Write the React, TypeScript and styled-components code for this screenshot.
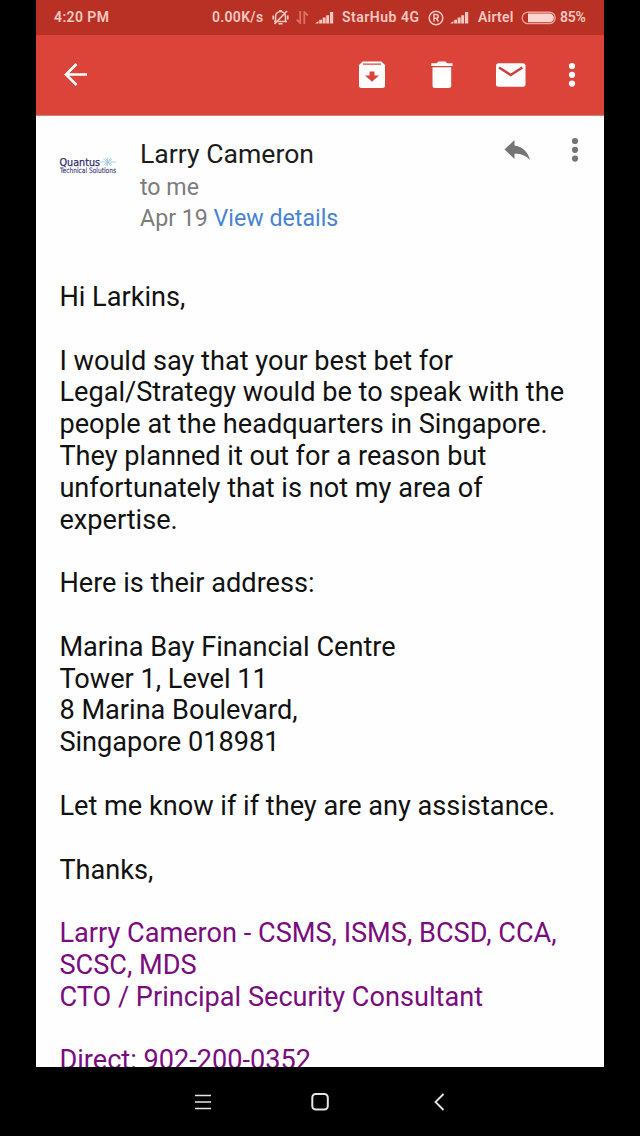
import React from 'react';
import styled, { createGlobalStyle } from 'styled-components';

const GlobalStyle = createGlobalStyle`
  * { box-sizing: border-box; }
  body { margin: 0; background: #000; font-family: Roboto, sans-serif; }
  svg { display: block; }
`;

const Phone = styled.div`
  width: 640px;
  height: 1136px;
  padding: 0 36px;
  background: #000;
  display: flex;
  flex-direction: column;
  overflow: hidden;
`;

const StatusBar = styled.header`
  height: 35px;
  flex: none;
  padding: 0 0 0 18px;
  background: #b93124;
  color: #fbc9c1;
  display: grid;
  grid-template-columns: 158px 60px 24px 19px 27px 86px 22px 28px 43px 39px 1fr;
  align-items: center;
  font-size: 14px;
  line-height: 35px;
  font-weight: 600;
  white-space: nowrap;
`;

const StatusText = styled.span<{ $spacing?: number }>`
  letter-spacing: ${(p) => p.$spacing ?? 0}px;
`;

const Toolbar = styled.nav`
  height: 81px;
  flex: none;
  padding: 0 19px 0 23px;
  background: #dc4439;
  border-bottom: 1px solid #c98780;
  color: #fff;
  display: flex;
  align-items: center;
`;

const Slot = styled.span<{ $width: number; $push?: boolean }>`
  width: ${(p) => p.$width}px;
  margin-left: ${(p) => (p.$push ? 'auto' : '0')};
  display: flex;
`;

const Mail = styled.main`
  height: 951px;
  flex: none;
  overflow: hidden;
  background: #fefefe;
`;

const MailHeader = styled.section`
  height: 165.9px;
  padding: 21px 25px 0 23px;
  display: flex;
`;

const Logo = styled.div`
  width: 81px;
  padding-top: 18px;
`;

const Sender = styled.div`
  flex: 1;
  white-space: nowrap;
`;

const Name = styled.div`
  font-size: 26.6px;
  line-height: 33px;
  padding-bottom: 2px;
  color: #1c1c1c;
`;

const Meta = styled.div`
  font-size: 23.2px;
  line-height: 31px;
  color: #7c7c7c;
`;

const Link = styled.a`
  color: #4783d2;
`;

const HeaderActions = styled.div`
  display: flex;
  color: #757575;
`;

const Body = styled.article`
  padding-left: 23.4px;
  font-size: 27.15px;
  line-height: 31.82px;
  color: #111;
  white-space: pre;
`;

const Paragraph = styled.p<{ $signature?: boolean }>`
  margin: 0 0 31.82px;
  color: ${(p) => (p.$signature ? '#7a0c7e' : 'inherit')};
`;

const NavBar = styled.footer`
  height: 69px;
  flex: none;
  color: #e6e6e6;
  display: flex;
  justify-content: center;
  align-items: center;
  gap: 94px;
`;

const Signal = () => (
  <svg width="19" height="13" viewBox="0 0 19 13" fill="currentColor">
    <path d="M0 12.500l3.500-2.400v2.400zM4.200 12.500V8.700h2.900v3.800zM7.700 12.500V6.500h2.900v6zM11.200 12.500V4.300h2.900v8.200zM15 12.500V1h3.200v11.500z" />
  </svg>
);

const Dots = () => (
  <svg width="8" height="26" viewBox="0 0 8 26" fill="currentColor">
    <circle cx="4" cy="4" r="3.100" />
    <circle cx="4" cy="12.800" r="3.100" />
    <circle cx="4" cy="21.600" r="3.100" />
  </svg>
);

const paragraphs = [
  'Hi Larkins,',
  'I would say that your best bet for\nLegal/Strategy would be to speak with the\npeople at the headquarters in Singapore.\nThey planned it out for a reason but\nunfortunately that is not my area of\nexpertise.',
  'Here is their address:',
  'Marina Bay Financial Centre\nTower 1, Level 11\n8 Marina Boulevard,\nSingapore 018981',
  'Let me know if if they are any assistance.',
  'Thanks,',
];

const signature = [
  'Larry Cameron - CSMS, ISMS, BCSD, CCA,\nSCSC, MDS\nCTO / Principal Security Consultant',
  'Direct: 902-200-0352',
];

export default function App() {
  return (
    <>
      <GlobalStyle />
      <Phone>
        <StatusBar>
          <StatusText $spacing={0.4}>4:20 PM</StatusText>
          <StatusText $spacing={0.3}>0.00K/s</StatusText>
          <svg width="17" height="17" viewBox="0 0 17 17" fill="none" stroke="currentColor" strokeWidth="1.600">
            <path d="M3.500 12V7.500a5 5 0 0 1 10 0V12M2 12.500h13M6.500 14.800h4M2.500 15L15 2M1.200 6.500v4M15.800 6.500v4M7 1.800h3" />
          </svg>
          <svg width="13" height="13" viewBox="0 0 13 13" fill="none" stroke="#dd7168" strokeWidth="1.800">
            <path d="M4.200 0v12L.7 8.500M8.300 13V1l3.500 3.500" />
          </svg>
          <Signal />
          <StatusText $spacing={0.5}>StarHub 4G</StatusText>
          <svg width="16" height="16" viewBox="0 0 16 16" fill="none" stroke="currentColor" strokeWidth="1.500">
            <circle cx="8" cy="8" r="6.800" />
            <path d="M6 11.500v-7h2.300a1.900 1.900 0 0 1 0 3.800H6M8.400 8.300l2 3.200" />
          </svg>
          <Signal />
          <StatusText $spacing={0.25}>Airtel</StatusText>
          <svg width="36" height="14" viewBox="0 0 36 14">
            <rect x="1.200" y="1.200" width="33" height="11.400" rx="5.700" fill="none" stroke="#f49c91" strokeWidth="1.400" />
            <path d="M7 2.500h21.500a4.400 4.400 0 0 1 0 8.800H7z" fill="#fbd5d0" />
          </svg>
          <StatusText $spacing={-0.2}>85%</StatusText>
        </StatusBar>

        <Toolbar>
          <Slot $width={32}>
            <svg width="32" height="32" viewBox="0 0 32 32" fill="none" stroke="currentColor" strokeWidth="2.600">
              <path d="M28 15.500H7M17.500 5L7 15.500 17.500 26" />
            </svg>
          </Slot>
          <Slot $width={70} $push>
            <svg width="32" height="32" viewBox="-1.500 0 32 32">
              <path fill="currentColor" d="M6 2.500h19l3.500 3.500v20.500a2.500 2.500 0 0 1-2.500 2.500H5a2.500 2.500 0 0 1-2.500-2.500V6z" />
              <path fill="#dc4439" d="M6.500 4.500h18v1.300h-18zM13 12.500h5v4h4.500l-7 6.300-7-6.300H13z" />
            </svg>
          </Slot>
          <Slot $width={68}>
            <svg width="32" height="32" viewBox="-1.500 0 32 32" fill="currentColor">
              <path d="M4.700 4.200h5.500l1.800-1.700h7l1.700 1.700H26v2.800H4.700zM6 8.300h18.700v18.200a2.500 2.500 0 0 1-2.500 2.500H8.500A2.500 2.500 0 0 1 6 26.500z" />
            </svg>
          </Slot>
          <Slot $width={75}>
            <svg width="34" height="32" viewBox="0 0 34 32">
              <rect x="3" y="4.200" width="29.500" height="23.500" rx="2.500" fill="currentColor" />
              <path d="M6 8.500l11.700 7.500 11.700-7.500" fill="none" stroke="#c94139" strokeWidth="2.600" />
            </svg>
          </Slot>
          <Slot $width={17}>
            <Dots />
          </Slot>
        </Toolbar>

        <Mail>
          <MailHeader>
            <Logo>
              <svg width="62" height="24" viewBox="0 0 62 24" overflow="visible">
                <g fontFamily="'DejaVu Sans', sans-serif">
                  <text x="0.500" y="10.500" fontSize="10.500" textLength="40.500" lengthAdjust="spacingAndGlyphs" fill="#2d2b6d" stroke="#2d2b6d" strokeWidth=".25">Quantus</text>
                  <text x="1" y="17.800" fontSize="7.500" textLength="56" lengthAdjust="spacingAndGlyphs" fill="#434185" stroke="#434185" strokeWidth=".15">Technical Solutions</text>
                </g>
                <path d="M41 7h16M44.500 4l8.500 6M44.500 10l8.500-6M48.700 2.500v9M46.500 3l5 8M51.500 3l-5 8" stroke="#9cc8de" strokeWidth=".8" fill="none" />
              </svg>
            </Logo>
            <Sender>
              <Name>Larry Cameron</Name>
              <Meta>to me</Meta>
              <Meta>Apr 19 <Link>View details</Link></Meta>
            </Sender>
            <HeaderActions>
              <Slot $width={67}>
                <svg width="27" height="26" viewBox="0 -1 27 26" fill="currentColor">
                  <path d="M.5 11.500L10.500 2v5.500c9 1.300 13.500 7 15.500 14.500-4-4.500-9-6.200-15.500-6.200V21z" />
                </svg>
              </Slot>
              <Dots />
            </HeaderActions>
          </MailHeader>
          <Body>
            {paragraphs.map((text) => (
              <Paragraph key={text}>{text}</Paragraph>
            ))}
            {signature.map((text) => (
              <Paragraph key={text} $signature>{text}</Paragraph>
            ))}
          </Body>
        </Mail>

        <NavBar>
          <svg width="26" height="24" viewBox="0 0 26 24" stroke="currentColor" strokeWidth="1.700">
            <path d="M5 5.500h16M5 12h16M5 18.500h16" />
          </svg>
          <svg width="20" height="24" viewBox="0 0 20 24" fill="none" stroke="currentColor" strokeWidth="2">
            <rect x="2.300" y="4" width="15.500" height="15.500" rx="3.500" />
          </svg>
          <svg width="26" height="24" viewBox="0 0 26 24" fill="none" stroke="currentColor" strokeWidth="1.800">
            <path d="M19.500 4l-8 8 8 8" />
          </svg>
        </NavBar>
      </Phone>
    </>
  );
}
